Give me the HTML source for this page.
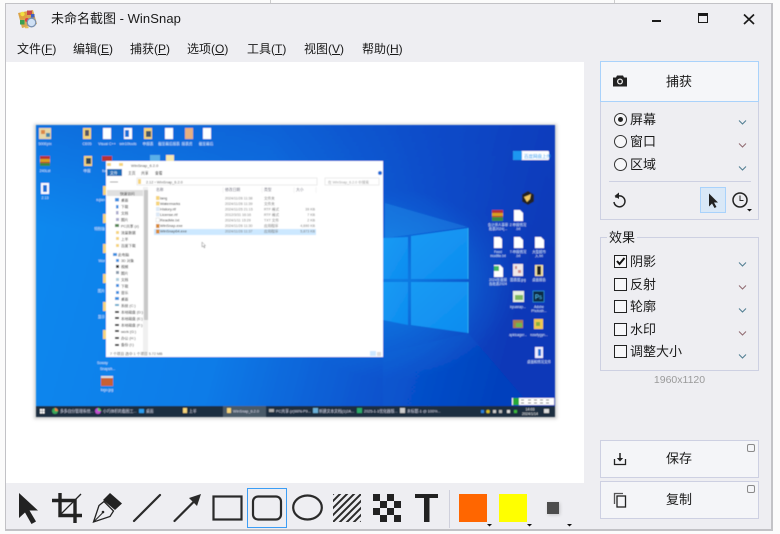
<!DOCTYPE html>
<html><head><meta charset="utf-8"><style>
html,body{margin:0;padding:0;width:780px;height:534px;overflow:hidden;background:#fbfbfb}
*{box-sizing:border-box}
body{font-family:"Liberation Sans","Noto Sans CJK SC",sans-serif;color:#1a1a1a;position:relative}
.a{position:absolute;white-space:nowrap}
#win{position:absolute;left:5px;top:3px;width:768px;height:528px;background:#eeeef2;border:1px solid #c2c2c6;border-width:1px 2px 2px 1px}
.m{top:41px;font-size:12px;line-height:17px}
.r{font-size:13px;line-height:18px;left:630px}
.box{position:absolute;border:1px solid #cdd0e2}
u{text-decoration:underline}
</style></head><body>
<div class="a" style="left:270px;top:0;width:1px;height:3px;background:#ccc"></div>
<div class="a" style="left:614px;top:0;width:1px;height:3px;background:#ccc"></div>
<div id="win"></div>
<div class="a" style="left:6px;top:62px;width:578px;height:421px;background:#fff"></div>

<div class="a" style="left:51px;top:10px;font-size:13px;line-height:18px">未命名截图 - <span style="letter-spacing:.1px">WinSnap</span></div>
<div class="a m" style="left:17px">文件(<u>F</u>)</div>
<div class="a m" style="left:73px">编辑(<u>E</u>)</div>
<div class="a m" style="left:130px">捕获(<u>P</u>)</div>
<div class="a m" style="left:187px">选项(<u>O</u>)</div>
<div class="a m" style="left:247px">工具(<u>T</u>)</div>
<div class="a m" style="left:304px">视图(<u>V</u>)</div>
<div class="a m" style="left:362px">帮助(<u>H</u>)</div>

<!-- right panel boxes -->
<div class="box" style="left:600px;top:100px;width:159px;height:120px"></div>
<div class="a" style="left:600px;top:61px;width:159px;height:41px;background:#f5f6f9;border:1px solid #a9d2fb"></div>
<div class="a" style="left:666px;top:73px;font-size:13px;line-height:18px">捕获</div>
<div class="a" style="left:609px;top:181px;width:142px;height:1px;background:#cdd0e2"></div>
<div class="a" style="left:700px;top:187px;width:26px;height:26px;background:#d9e8f7;border:1px solid #a9d2fb"></div>
<div class="a r" style="top:111px">屏幕</div>
<div class="a r" style="top:133px">窗口</div>
<div class="a r" style="top:156px">区域</div>

<div class="box" style="left:600px;top:237px;width:159px;height:134px"></div>
<div class="a" style="left:607px;top:229px;padding:0 2px;font-size:13px;line-height:17px;background:#eeeef2">效果</div>
<div class="a r" style="top:253px">阴影</div>
<div class="a r" style="top:276px">反射</div>
<div class="a r" style="top:298px">轮廓</div>
<div class="a r" style="top:321px">水印</div>
<div class="a r" style="top:343px">调整大小</div>
<div class="a" style="left:600px;width:159px;top:374px;text-align:center;font-size:10.5px;line-height:13px;color:#9a9a9a">1960x1120</div>

<div class="a" style="left:600px;top:440px;width:159px;height:38px;background:#f4f5f8;border:1px solid #cdd0e2"></div>
<div class="a" style="left:600px;top:481px;width:159px;height:38px;background:#f4f5f8;border:1px solid #cdd0e2"></div>
<div class="a" style="left:666px;top:450px;font-size:13px;line-height:18px">保存</div>
<div class="a" style="left:666px;top:491px;font-size:13px;line-height:18px">复制</div>
<div class="a" style="left:747px;top:444px;width:8px;height:8px;border:1px solid #8a8a8a;border-radius:2px"></div>
<div class="a" style="left:747px;top:485px;width:8px;height:8px;border:1px solid #8a8a8a;border-radius:2px"></div>

<div class="a" style="left:247px;top:488px;width:40px;height:40px;border:1px solid #3b9df5"></div>

<svg class="a" style="left:0;top:0" width="780" height="534" viewBox="0 0 780 534" xmlns="http://www.w3.org/2000/svg" font-family="Liberation Sans,Noto Sans CJK SC,sans-serif">
<defs>
<linearGradient id="dsk" x1="0" y1="0" x2="1" y2="0.15"><stop offset="0" stop-color="#0b8aef"/><stop offset=".45" stop-color="#0a7ce8"/><stop offset=".8" stop-color="#0850cc"/><stop offset="1" stop-color="#0739b8"/></linearGradient>
<linearGradient id="top" x1="0.6" y1="0" x2="0.4" y2="1"><stop offset="0" stop-color="#0a3fc0" stop-opacity=".45"/><stop offset=".45" stop-color="#0a3fc0" stop-opacity="0"/></linearGradient>
<radialGradient id="glow" cx=".5" cy=".5" r=".5"><stop offset="0" stop-color="#1aa0f6" stop-opacity=".55"/><stop offset="1" stop-color="#1aa0f6" stop-opacity="0"/></radialGradient>
<linearGradient id="pane" x1="0" y1="0" x2="1" y2="1"><stop offset="0" stop-color="#169bf4"/><stop offset="1" stop-color="#0f8cf0"/></linearGradient>
<filter id="b"><feGaussianBlur stdDeviation=".42"/></filter>
<filter id="sh" x="-30%" y="-30%" width="160%" height="160%"><feGaussianBlur stdDeviation="1.5"/></filter>
<clipPath id="hc"><rect x="333" y="494" width="28" height="28"/></clipPath>
</defs>

<!-- screenshot -->
<rect x="34" y="124" width="523" height="295" fill="#999" opacity=".45" filter="url(#sh)"/>
<g filter="url(#b)">
<rect x="36" y="125" width="519" height="292" fill="url(#dsk)"/>
<rect x="36" y="125" width="519" height="292" fill="url(#top)"/>
<ellipse cx="395" cy="285" rx="120" ry="95" fill="url(#glow)"/>
<path d="M385 203L468 227L385 238Z" fill="#2aa6f6" opacity=".3"/>
<path d="M383 354L468 333L540 417H383Z" fill="#0a6fdc" opacity=".15"/>
<path d="M383 238L408 237V279H383Z" fill="url(#pane)"/>
<path d="M411 236L468 228V279H411Z" fill="url(#pane)"/>
<path d="M383 282H408V325L383 320Z" fill="url(#pane)"/>
<path d="M411 282H468V333L411 325Z" fill="url(#pane)"/>
<path d="M468 228V279M468 282V333" stroke="#37c6f8" stroke-width="1" opacity=".7"/>

<!-- desktop icons top rows -->
<g>
<rect x="39" y="128" width="12" height="11" fill="#e8d8a8"/><rect x="41" y="130" width="4" height="4" fill="#d84"/><rect x="46" y="133" width="4" height="4" fill="#48a"/>
<g fill="#f5d47a"><rect x="83" y="128" width="8" height="11"/><rect x="103" y="128" width="8" height="11" fill="#fff"/><rect x="124" y="128" width="8" height="11" fill="#fff"/><rect x="144" y="128" width="8" height="11"/></g>
<rect x="85" y="130" width="4" height="6" fill="#556"/><rect x="125" y="130" width="4" height="7" fill="#1a6fd8"/><rect x="146" y="131" width="5" height="6" fill="#456"/>
<rect x="165" y="128" width="8" height="11" fill="#fff"/><rect x="185" y="128" width="8" height="11" fill="#e8b080"/><rect x="203" y="128" width="8" height="11" fill="#fff"/>
<rect x="40" y="156" width="10" height="10" fill="#b83030"/><rect x="40" y="159" width="10" height="3" fill="#d8a020"/><rect x="40" y="163" width="10" height="3" fill="#3a8a40"/>
<rect x="84" y="156" width="8" height="10" fill="#f5d47a"/><rect x="86" y="158" width="5" height="6" fill="#345"/>
<rect x="102" y="156" width="10" height="5" fill="#b83030"/>
<rect x="150" y="155" width="10" height="6" fill="#5ab0e8"/><rect x="166" y="155" width="8" height="6" fill="#f5e8b0"/>
<rect x="41" y="183" width="8" height="11" fill="#fff"/><rect x="43" y="185" width="4" height="7" fill="#1a6fd8"/>
</g>
<g fill="#f5d47a"><rect x="103" y="186" width="3" height="9"/><rect x="103" y="214" width="3" height="9"/><rect x="103" y="244" width="3" height="9"/><rect x="103" y="274" width="3" height="9"/><rect x="103" y="302" width="3" height="9"/><rect x="103" y="330" width="3" height="9"/></g>
<g font-size="3.6" fill="#e8f2ff" text-anchor="middle">
<text x="45" y="145">500Epix</text><text x="87" y="145">CE05</text><text x="107" y="145">Visual C++</text><text x="128" y="145">win10tools</text><text x="148" y="145">申报表</text><text x="169" y="145">截至最后报表</text><text x="187" y="145">报表资</text><text x="206" y="145">截至最后</text>
<text x="45" y="172">240Lst</text><text x="87" y="172">申报</text><text x="107" y="172">batfile</text>
<text x="45" y="199">2.13</text>
</g>
<g font-size="3.6" fill="#e8f2ff" text-anchor="end"><text x="105" y="201">rujian</text><text x="105" y="230">特别版</text><text x="105" y="262">Wor</text><text x="105" y="292">图片</text><text x="105" y="318">显示</text></g>
<text x="97" y="364" font-size="3.6" fill="#e8f2ff">Soway</text><text x="100" y="370" font-size="3.6" fill="#e8f2ff">Snapsh...</text>
<rect x="101" y="376" width="12" height="10" fill="#c86030"/><rect x="101" y="376" width="12" height="2" fill="#ddd"/><text x="107" y="391" font-size="3.6" fill="#e8f2ff" text-anchor="middle">logo.jpg</text>

<!-- right icons -->
<rect x="513" y="151" width="36" height="9" rx="1" fill="#fff"/><rect x="513" y="151" width="9" height="9" rx="1" fill="#1e96f0"/><text x="524" y="158" font-size="4.5" fill="#2a9df0">百度网盘上传</text>
<path d="M528 191l6 3.500v7l-6 3.500-6-3.500v-7Z" fill="#222"/><path d="M524 197l5-2 2-1-1 5-3 3Z" fill="#f0c860"/>
<rect x="492" y="210" width="11" height="11" fill="#b83030"/><rect x="492" y="213" width="11" height="3" fill="#d8a020"/><rect x="492" y="217" width="11" height="4" fill="#3a8a40"/>
<path d="M514 210h6l3 3v8h-9Z" fill="#fff"/>
<g fill="#fff"><path d="M494 237h6l2 2v9h-8Z"/><path d="M514 237h6l3 3v8h-9Z"/><path d="M535 237h6l3 3v8h-9Z"/><path d="M494 265h6l3 3v9h-9Z"/></g>
<rect x="494" y="266" width="5" height="5" fill="#3cb860"/>
<rect x="513" y="264" width="10" height="12" fill="#f0e8e8"/><rect x="515" y="266" width="2" height="3" fill="#c88"/><rect x="518" y="270" width="3" height="3" fill="#c88"/>
<rect x="535" y="265" width="8" height="11" fill="#f5e4a0"/><rect x="537" y="266" width="4" height="9" fill="#222"/>
<rect x="513" y="291" width="11" height="11" fill="#e8f0e0"/><rect x="515" y="295" width="8" height="5" fill="#7cb860"/>
<rect x="533" y="291" width="11" height="11" fill="#0d2a42" stroke="#33a8e8" stroke-width=".6"/><text x="535" y="299" font-size="6" fill="#4fc0f8">Ps</text>
<rect x="513" y="320" width="10" height="8" fill="#a88050"/><rect x="516" y="323" width="6" height="4" fill="#6cb850"/>
<rect x="534" y="319" width="9" height="10" fill="#f0c850"/><rect x="536" y="322" width="4" height="4" fill="#88b040"/>
<rect x="535" y="347" width="8" height="11" fill="#eef"/><rect x="538" y="349" width="3" height="7" fill="#1a6fd8"/>
<g font-size="3.400" fill="#e8f2ff" text-anchor="middle">
<text x="498" y="226">会计师人事审</text><text x="498" y="230">批表2024(...</text><text x="518" y="226">2.申报情况</text><text x="518" y="230">.txt</text>
<text x="498" y="253">Feed</text><text x="498" y="257">modfile.txt</text><text x="518" y="253">7-申报情况</text><text x="518" y="257">.txt</text><text x="539" y="253">大型超市</text><text x="539" y="257">入.txt</text>
<text x="498" y="281">2024年度报</text><text x="498" y="285">告批表2024</text><text x="518" y="281">图表图.jpg</text><text x="539" y="281">桌面报告</text>
<text x="518" y="308">kyuanap...</text><text x="539" y="308">Adobe</text><text x="539" y="312">Photosh...</text>
<text x="518" y="336">apktoager...</text><text x="539" y="336">rosefygyn...</text>
<text x="539" y="363">桌面和情况文件</text>
</g>

<!-- explorer -->
<rect x="106" y="161" width="277" height="196" fill="#fff"/>
<rect x="107" y="163" width="4" height="3" fill="#f5d47a"/><rect x="119" y="163" width="4" height="3" fill="#f5d47a"/>
<text x="131" y="167" font-size="4" fill="#444">WinSnap_6.2.0</text>
<rect x="107" y="169" width="15" height="7" fill="#1a6cb8"/>
<g font-size="3.800" fill="#333"><text x="110" y="174.500" fill="#fff">文件</text><text x="128" y="174.500">主页</text><text x="141" y="174.500">共享</text><text x="155" y="174.500">查看</text></g>
<rect x="137" y="178" width="180" height="7" fill="#fff" stroke="#d8d8d8" stroke-width=".5"/><rect x="138" y="179" width="3" height="5" fill="#f5d47a"/>
<rect x="325" y="178" width="54" height="7" fill="#fff" stroke="#d8d8d8" stroke-width=".5"/>
<text x="146" y="183.500" font-size="3.800" fill="#555">2.12 › WinSnap_6.2.0</text>
<text x="328" y="183.500" font-size="3.600" fill="#999">在 WinSnap_6.2.0 中搜索</text>
<circle cx="380" cy="173" r="2" fill="#1a6cd8"/>
<path d="M110 182h8" stroke="#666" stroke-width=".6"/>
<g font-size="3.800" fill="#667"><text x="156" y="191">名称</text><text x="225" y="191">修改日期</text><text x="264" y="191">类型</text><text x="296" y="191">大小</text></g>
<path d="M223 187v6M262 187v6M294 187v6M316 187v6" stroke="#e4e4e4" stroke-width=".4"/>
<rect x="154" y="229" width="162" height="6" fill="#cce8ff"/>
<g fill="#f5d47a"><rect x="156" y="196" width="3.500" height="4"/><rect x="156" y="201.500" width="3.500" height="4"/></g>
<g fill="#dce8f5"><rect x="156" y="207" width="3.500" height="4"/><rect x="156" y="212.500" width="3.500" height="4"/></g>
<rect x="156" y="218" width="3.500" height="4" fill="#fff" stroke="#bbb" stroke-width=".3"/>
<g fill="#d88a30"><rect x="156" y="224" width="3.500" height="4"/><rect x="156" y="229.500" width="3.500" height="4"/></g>
<g font-size="3.800" fill="#333"><text x="160" y="199.500">lang</text><text x="160" y="205">Watermarks</text><text x="160" y="210.500">History.rtf</text><text x="160" y="216">License.rtf</text><text x="160" y="221.500">ReadMe.txt</text><text x="160" y="227">WinSnap.exe</text><text x="160" y="232.500">WinSnap64.exe</text></g>
<g font-size="3.600" fill="#777"><text x="225" y="199.500">2024/11/26 11:38</text><text x="225" y="205">2024/11/26 11:39</text><text x="225" y="210.500">2024/11/25 21:15</text><text x="225" y="216">2012/3/31 16:16</text><text x="225" y="221.500">2024/1/11 15:29</text><text x="225" y="227">2024/11/26 11:30</text><text x="225" y="232.500">2024/11/26 11:37</text></g>
<g font-size="3.600" fill="#777"><text x="264" y="199.500">文件夹</text><text x="264" y="205">文件夹</text><text x="264" y="210.500">RTF 格式</text><text x="264" y="216">RTF 格式</text><text x="264" y="221.500">TXT 文件</text><text x="264" y="227">应用程序</text><text x="264" y="232.500">应用程序</text></g>
<g font-size="3.600" fill="#777" text-anchor="end"><text x="315" y="210.500">39 KB</text><text x="315" y="216">7 KB</text><text x="315" y="221.500">2 KB</text><text x="315" y="227">4,690 KB</text><text x="315" y="232.500">5,873 KB</text></g>
<path d="M202 242v5l1.300-1 1 2 .7-.4-1-2h1.600Z" fill="#fff" stroke="#555" stroke-width=".4"/>
<!-- sidebar -->
<rect x="107" y="190" width="36" height="6" fill="#e0e0e0"/>
<rect x="143" y="187" width="5" height="166" fill="#f0f0f0"/><rect x="144" y="190" width="4" height="130" fill="#c8c8c8"/>
<g font-size="3.700" fill="#333">
<text x="120" y="195">快速访问</text><text x="121" y="201.500">桌面</text><text x="121" y="208">下载</text><text x="121" y="214.500">文档</text><text x="121" y="221">图片</text><text x="121" y="227.500">PC共享 (z)</text><text x="121" y="234">流量数据</text><text x="121" y="240.500">上半</text><text x="121" y="247">百度下载</text>
<text x="118" y="256">此电脑</text><text x="121" y="262">3D 对象</text><text x="121" y="268">视频</text><text x="121" y="274.500">图片</text><text x="121" y="281">文档</text><text x="121" y="287.500">下载</text><text x="121" y="294">音乐</text><text x="121" y="300.500">桌面</text><text x="121" y="307">系统 (C:)</text><text x="121" y="313.500">本地磁盘 (D:)</text><text x="121" y="320">本地磁盘 (E:)</text><text x="121" y="326.500">本地磁盘 (F:)</text><text x="121" y="333">work (G:)</text><text x="121" y="339.500">办公 (H:)</text><text x="121" y="346">备份 (I:)</text>
</g>
<g fill="#3a90e0"><rect x="115" y="198" width="4" height="3.500"/><rect x="116" y="205" width="2.500" height="3.500"/><rect x="116" y="211" width="2.500" height="3.500" fill="#aac"/><rect x="116" y="218" width="3" height="3" fill="#aac"/><rect x="115" y="224" width="4" height="3" fill="#585"/><rect x="116" y="231" width="3" height="3" fill="#f5d47a"/><rect x="116" y="237" width="3" height="3" fill="#f5d47a"/><rect x="116" y="244" width="3" height="3" fill="#f5d47a"/><rect x="113" y="253" width="4" height="3"/><rect x="116" y="259" width="3" height="3"/><rect x="116" y="265" width="3" height="3" fill="#333"/><rect x="116" y="271" width="3" height="3" fill="#89a"/><rect x="116" y="278" width="3" height="3" fill="#acd"/><rect x="116" y="284" width="3" height="3"/><rect x="116" y="291" width="3" height="3"/><rect x="115" y="297" width="4" height="3"/><rect x="115" y="304" width="4" height="2" fill="#6ac"/><rect x="115" y="311" width="4" height="2" fill="#333"/><rect x="115" y="317" width="4" height="2" fill="#333"/><rect x="115" y="324" width="4" height="2" fill="#333"/><rect x="115" y="330" width="4" height="2" fill="#333"/><rect x="115" y="337" width="4" height="2" fill="#333"/><rect x="115" y="344" width="4" height="2" fill="#333"/></g>
<text x="110" y="355" font-size="3.700" fill="#555">7 个项目   选中 1 个项目  5.72 MB</text>
<rect x="370" y="351" width="6" height="5" fill="#cce8ff"/><rect x="377" y="352" width="4" height="4" fill="#ddd"/>

<!-- taskbar -->
<rect x="36" y="406" width="519" height="11" fill="#1b2d3f"/>
<rect x="223" y="406" width="43" height="11" fill="#4a5a68"/>
<g fill="#fff"><rect x="40" y="409" width="2" height="2"/><rect x="42.500" y="409" width="2" height="2"/><rect x="40" y="411.500" width="2" height="2"/><rect x="42.500" y="411.500" width="2" height="2"/></g>
<circle cx="55" cy="411" r="3" fill="#3aa85a"/><path d="M55 408a3 3 0 0 1 3 3h-3Z" fill="#e84"/><circle cx="98" cy="411" r="3" fill="#c050d0"/><path d="M98 408a3 3 0 0 1 3 3h-3Z" fill="#5c5"/>
<rect x="139" y="409" width="5" height="4" fill="#2a9df0"/><rect x="183" y="408" width="4" height="5" fill="#f5d47a"/><rect x="227" y="408" width="4" height="5" fill="#f5d47a"/><rect x="269" y="409" width="5" height="3" fill="#aaa"/><rect x="313" y="408" width="5" height="5" fill="#6ab0d8"/><rect x="357" y="408" width="5" height="5" fill="#2aa868"/><rect x="400" y="408" width="5" height="5" fill="#ccc"/>
<g font-size="3.800" fill="#dde"><text x="60" y="412.500">多多自分管理系统...</text><text x="103" y="412.500">小巧体积的截图工...</text><text x="146" y="412.500">桌面</text><text x="189" y="412.500">上半</text><text x="233" y="412.500">WinSnap_6.2.0</text><text x="276" y="412.500">PC共享 (z)WIN-P9...</text><text x="319" y="412.500">新建文本文档(1)2A...</text><text x="364" y="412.500">2025-1-1优化器版...</text><text x="407" y="412.500">未标题-1 @ 100%...</text></g>
<rect x="512" y="398" width="42" height="7" fill="#fff"/><rect x="513" y="398" width="6" height="7" fill="#28a838"/>
<path d="M521 400h3M528 400h3M534 400h3M540 400h3M546 400h3M521 403h3M528 403h3M534 403h3M540 403h3M546 403h3" stroke="#444" stroke-width=".8"/>
<g><rect x="481" y="410" width="3" height="3" fill="#2a80e0"/><circle cx="488" cy="411.500" r="1.800" fill="#d8c020"/><rect x="493" y="410" width="3" height="3" fill="#ccc"/><rect x="499" y="410" width="3" height="3" fill="#bbb"/><rect x="507" y="410" width="3" height="3" fill="#ddd"/><rect x="514" y="410" width="3" height="3" fill="#3cb838"/></g>
<text x="530" y="410.500" font-size="3.600" fill="#fff" text-anchor="middle">14:03</text><text x="530" y="415" font-size="3.600" fill="#fff" text-anchor="middle">2024/1/14</text>
<rect x="544" y="409" width="5" height="4" fill="#ddd"/>
</g>

<!-- app icon -->
<g>
<path d="M18 13L33 10L37 24L22 28Z" fill="#d8a850"/>
<path d="M19 13L26 11.600 27.500 18 20.500 19.500Z" fill="#e0a040"/>
<circle cx="22.500" cy="14" r="2.200" fill="#f0e040"/><rect x="27" y="10.500" width="5" height="4.500" fill="#c84848"/><rect x="20" y="20" width="4.500" height="4.500" fill="#3aa050"/><rect x="31" y="14" width="3.500" height="3.500" fill="#4060c0"/><circle cx="27" cy="20" r="2" fill="#e04040"/>
<circle cx="31.500" cy="22.500" r="4.300" fill="#cfe0f4" stroke="#7c92b0" stroke-width="1.300"/>
<path d="M25 27.500h3.500" stroke="#e8c050" stroke-width="1.500"/>
</g>
<!-- window controls -->
<rect x="652" y="20" width="9" height="2" fill="#1a1a1a"/>
<rect x="698.500" y="13.500" width="9" height="9" fill="none" stroke="#1a1a1a"/><rect x="698" y="13" width="10" height="3" fill="#1a1a1a"/>
<path d="M744 14.500L754 24M754 14.500L744 24" stroke="#1a1a1a" stroke-width="1.700" fill="none"/>

<!-- camera -->
<path d="M613 77.500h3l1-2h6l1 2h3v9h-14Z" fill="#222"/><circle cx="620" cy="81.500" r="3" fill="#eee"/><circle cx="620" cy="81.500" r="1.700" fill="#222"/>
<!-- radios -->
<g fill="#f7f7f9" stroke="#333" stroke-width="1"><circle cx="620.500" cy="119.500" r="6"/><circle cx="620.500" cy="141.500" r="6"/><circle cx="620.500" cy="164.500" r="6"/></g>
<circle cx="620.500" cy="119.500" r="2.500" fill="#222"/>
<!-- chevrons -->
<g fill="none" stroke-width="1">
<path d="M739 120.500l3.500 3.500 3.500-3.500" stroke="#4f7c90"/>
<path d="M739 143.500l3.500 3.500 3.500-3.500" stroke="#8f6a70"/>
<path d="M739 166.500l3.500 3.500 3.500-3.500" stroke="#4f7c90"/>
<path d="M739 262.500l3.500 3.500 3.500-3.500" stroke="#4f7c90"/>
<path d="M739 285.500l3.500 3.500 3.500-3.500" stroke="#8f6a70"/>
<path d="M739 308.500l3.500 3.500 3.500-3.500" stroke="#4f7c90"/>
<path d="M739 331.500l3.500 3.500 3.500-3.500" stroke="#8f6a70"/>
<path d="M739 354.500l3.500 3.500 3.500-3.500" stroke="#4f7c90"/>
</g>
<!-- refresh -->
<path d="M615.500 197.500A5.500 5.500 0 1 1 614 202" fill="none" stroke="#222" stroke-width="1.500"/>
<path d="M619 192.500v6.500l-4.500-3Z" fill="#222"/>
<!-- cursor small -->
<path d="M709 193.500v13l3-3 2.500 4.500 2-1-2.500-4.500h4Z" fill="#222"/>
<!-- clock -->
<circle cx="740" cy="200" r="7" fill="none" stroke="#222" stroke-width="1.500"/><path d="M740 195.500v5h3.500" fill="none" stroke="#222" stroke-width="1"/>
<path d="M747 209h5l-2.500 2.500Z" fill="#111"/>
<!-- checkboxes -->
<g fill="#f7f7f9" stroke="#222" stroke-width="1"><rect x="614.500" y="255.500" width="12" height="12"/><rect x="614.500" y="278.500" width="12" height="12"/><rect x="614.500" y="300.500" width="12" height="12"/><rect x="614.500" y="323.500" width="12" height="12"/><rect x="614.500" y="345.500" width="12" height="12"/></g>
<path d="M617 261l2.500 3 5-6" fill="none" stroke="#111" stroke-width="2"/>
<!-- save/copy icons -->
<path d="M614.500 459v5.500h11V459" fill="none" stroke="#222" stroke-width="1.300"/><path d="M620 453v7" stroke="#222" stroke-width="1.500"/><path d="M616.800 458h6.400l-3.200 3.500Z" fill="#222"/>
<path d="M614.500 504V493.500H623" fill="none" stroke="#555" stroke-width="1.300"/><rect x="617" y="496" width="8.500" height="11" fill="none" stroke="#222" stroke-width="1.300"/>

<!-- toolbar -->
<path d="M19 493V518L25 512.500 31.500 524 36 521.500 29.500 510.500H38Z" fill="#222"/>
<path d="M60 493V515.500H82M52 500.500H75V523" fill="none" stroke="#222" stroke-width="3.400"/><path d="M60 515L81 494" stroke="#222" stroke-width="1.300"/>
<path d="M93.500 522L99 505.500 104 501.500 113.500 511 110 516.500Z" fill="none" stroke="#222" stroke-width="1.300"/>
<path d="M93.500 522L102.500 513" stroke="#222" stroke-width="1"/>
<path d="M110 493L122 503.500 115 510 103 500Z" fill="#222"/><circle cx="103" cy="512" r="1.300" fill="#222"/>
<path d="M134 521L160 495" stroke="#2a2a2a" stroke-width="2.200" stroke-linecap="round"/>
<path d="M174.500 521L195 500.500" stroke="#2a2a2a" stroke-width="2.200" stroke-linecap="round"/><path d="M201 494L197 506 193 502 189 498Z" fill="#2a2a2a"/>
<rect x="213.500" y="496.500" width="28" height="23" fill="none" stroke="#2a2a2a" stroke-width="2.200"/>
<rect x="253" y="496.500" width="28" height="23" rx="5" fill="none" stroke="#2a2a2a" stroke-width="2.200"/>
<ellipse cx="307.500" cy="507.500" rx="14.300" ry="12" fill="none" stroke="#2a2a2a" stroke-width="2.200"/>
<g clip-path="url(#hc)" stroke="#2a2a2a" stroke-width="2"><path d="M325 502L341 486M325 509L348 486M325 516L355 486M325 523L362 486M325 530L369 486M332 530L376 486M339 530L376 493M346 530L376 500M353 530L376 507M360 530L376 514"/></g>
<g fill="#222"><rect x="373" y="494" width="7" height="7"/><rect x="387" y="494" width="7" height="7"/><rect x="380" y="501" width="7" height="7"/><rect x="394" y="501" width="7" height="7"/><rect x="373" y="508" width="7" height="7"/><rect x="387" y="508" width="7" height="7"/><rect x="380" y="515" width="7" height="7"/><rect x="394" y="515" width="7" height="7"/></g>
<path d="M415 494H438V498H429.500V522H424V498H415Z" fill="#222"/>
<rect x="449" y="490" width="1" height="38" fill="#cfd0dc"/>
<rect x="459" y="494" width="28" height="28" fill="#ff6600"/>
<rect x="499" y="494" width="28" height="28" fill="#ffff00"/>
<rect x="548" y="503" width="12" height="12" fill="#aaa" opacity=".6" filter="url(#sh)"/>
<rect x="547" y="502" width="12" height="12" fill="#4d4d4d"/>
<g fill="#111"><path d="M487 524h5l-2.500 2.500Z"/><path d="M527 524h5l-2.500 2.500Z"/><path d="M567 524h5l-2.500 2.500Z"/></g>
</svg>
</body></html>
